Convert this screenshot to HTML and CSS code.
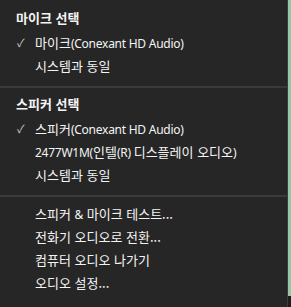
FILE: index.html
```html
<!DOCTYPE html>
<html lang="ko">
<head>
  <meta charset="UTF-8">
  <title>오디오 메뉴</title>
  <link rel="stylesheet" href="styles.css">
</head>
<body>
  <div class="menu">
    <div class="group">
      <div class="title">마이크 선택</div>
      <div class="item checked">마이크<span class="en">(Conexant HD Audio)</span></div>
      <div class="item">시스템과 동일</div>
    </div>
    <div class="sep"></div>
    <div class="group">
      <div class="title">스피커 선택</div>
      <div class="item checked">스피커<span class="en">(Conexant HD Audio)</span></div>
      <div class="item"><span class="en">2477W1M(</span>인텔<span class="en">(R) </span>디스플레이 오디오<span class="en">)</span></div>
      <div class="item">시스템과 동일</div>
    </div>
    <div class="sep"></div>
    <div class="group actions">
      <div class="item">스피커 <span class="en">&amp;</span> 마이크 테스트...</div>
      <div class="item">전화기 오디오로 전환...</div>
      <div class="item">컴퓨터 오디오 나가기</div>
      <div class="item">오디오 설정...</div>
    </div>
  </div>
</body>
</html>
```

FILE: styles.css
```css
body {
  margin: 0;
  height: 307px;
  background: linear-gradient(#94c9a8 296px, #1e1e1e 296px);
  font-family: "Noto Sans CJK KR", "Noto Sans", sans-serif;
}

.menu {
  width: 288px;
  height: 307px;
  box-sizing: border-box;
  padding-top: 2px;
  background-color: #262626;
  border-right: 1px solid #3c3c3c;
  color: #f4f4f4;
  font-size: 13px;
}

.group {
  padding: 3px 0 9px;
}

.actions {
  padding-top: 5px;
}

.title {
  padding-left: 16px;
  height: 26px;
  line-height: 26px;
  font-weight: bold;
  font-size: 13px;
}

.item {
  position: relative;
  padding-left: 35px;
  height: 23px;
  line-height: 23px;
}

.en {
  font-family: "Noto Sans", sans-serif;
  font-size: 12px;
  letter-spacing: -0.25px;
}

.checked::before {
  content: "\2713";
  position: absolute;
  left: 17px;
  color: #cfcfcf;
  font-size: 11px;
}

.sep {
  height: 2px;
  background-color: #3a3a3a;
}
```
